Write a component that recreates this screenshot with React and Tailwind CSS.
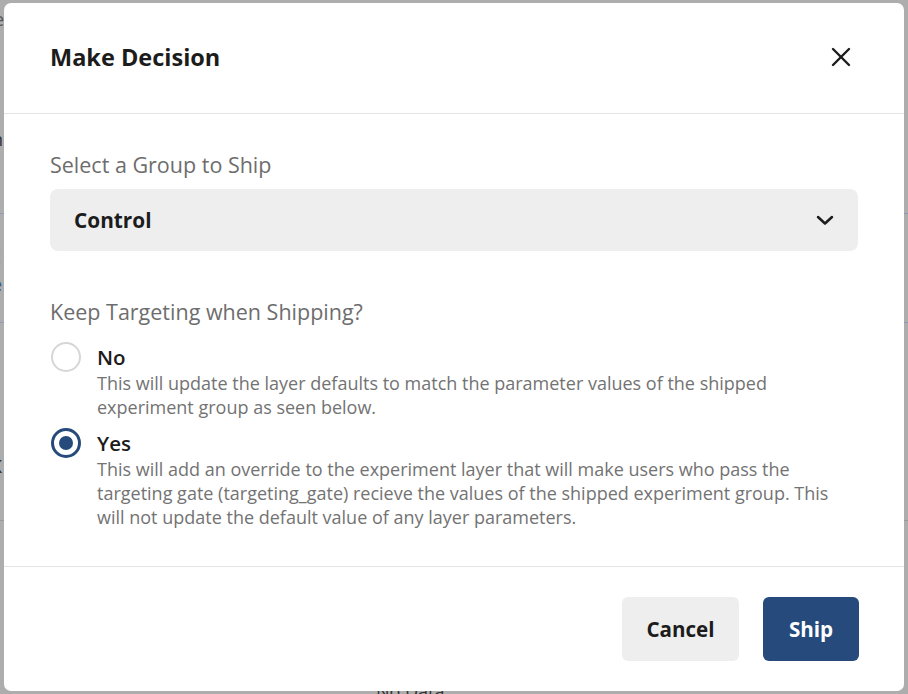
import React from "react";

export default function App() {
  return (
    <div
      className="relative w-[908px] h-[694px] overflow-hidden bg-[#adadad]"
      style={{ fontFamily: '"Open Sans", "Noto Sans", sans-serif' }}
    >
      {/* faint background page bits */}
      <div className="absolute left-0 top-[213px] w-[908px] h-px bg-[#8c9bb8]" />
      <div className="absolute left-0 top-[322px] w-[908px] h-px bg-[#8c9bb8]" />
      <div className="absolute left-0 top-[520px] w-[908px] h-px bg-[#9a9a9a]" />
      <div className="absolute left-[-6px] top-[6px] text-[18px] text-[#555]">e</div>
      <div className="absolute left-[-8px] top-[126px] text-[18px] text-[#333]">n</div>
      <div className="absolute left-[-8px] top-[243px] text-[18px] text-[#3a5c9a]">c</div>
      <div className="absolute left-[-8px] top-[271px] text-[18px] text-[#3a5c9a]">e</div>
      <div className="absolute left-[-9px] top-[453px] text-[18px] text-[#333]">K</div>
      <div className="absolute left-[376px] top-[678px] text-[18px] text-[#333]">No Data</div>

      {/* modal */}
      <div className="absolute left-[4px] top-[3px] w-[900px] h-[688px] bg-white rounded-[7px] flex flex-col">
        {/* header */}
        <div className="h-[111px] shrink-0 flex items-center justify-between pl-[46px] pr-[52px] border-b border-[#e4e4e4]">
          <h2 className="text-[23.5px] font-bold text-[#1c1c1c] leading-[30px] -mt-[3px]">Make Decision</h2>
          <svg width="22" height="22" viewBox="0 0 22 22" fill="none" stroke="#1c1c1c" strokeWidth="2.4" strokeLinecap="round" className="-mt-[3px]">
            <line x1="3" y1="3" x2="19" y2="19" />
            <line x1="19" y1="3" x2="3" y2="19" />
          </svg>
        </div>

        {/* body */}
        <div className="flex-1 px-[46px] pt-[37px] border-b border-[#e4e4e4]">
          <div className="text-[21.5px] leading-[28px] text-[#6d6d6d]">Select a Group to Ship</div>
          <div className="mt-[10px] h-[62px] rounded-[8px] bg-[#eeeeee] flex items-center justify-between pl-[24px] pr-[24px]">
            <span className="text-[20.8px] font-bold text-[#1c1c1c] mt-[2px]">Control</span>
            <svg width="18" height="12" viewBox="0 0 18 12" fill="none" stroke="#1c1c1c" strokeWidth="2.5" strokeLinecap="round" strokeLinejoin="round">
              <polyline points="2,3 9,9.5 16,3" />
            </svg>
          </div>

          <div className="mt-[47px] text-[21.5px] leading-[28px] text-[#6d6d6d]">Keep Targeting when Shipping?</div>

          <div className="mt-[17px] flex gap-[16px]">
            <div className="w-[31px] shrink-0 flex justify-center">
              <div className="w-[30px] h-[30px] -mt-px rounded-full border-[2.5px] border-[#d6d6d6] bg-white" />
            </div>
            <div>
              <div className="text-[20.5px] leading-[28px] font-semibold text-[#1c1c1c]">No</div>
              <div className="text-[18px] leading-[24px] text-[#737373]">
                This will update the layer defaults to match the parameter values of the shipped experiment group as seen below.
              </div>
            </div>
          </div>

          <div className="mt-[10px] flex gap-[16px]">
            <div className="w-[31px] shrink-0 flex justify-center">
              <div className="w-[30px] h-[30px] -mt-px rounded-full border-[3px] border-[#254a7b] bg-white flex items-center justify-center">
                <div className="w-[14px] h-[14px] rounded-full bg-[#254a7b]" />
              </div>
            </div>
            <div>
              <div className="text-[20.5px] leading-[28px] font-semibold text-[#1c1c1c]">Yes</div>
              <div className="text-[18px] leading-[24px] text-[#737373]">
                This will add an override to the experiment layer that will make users who pass the targeting gate (targeting_gate) recieve the values of the shipped experiment group. This will not update the default value of any layer parameters.
              </div>
            </div>
          </div>
        </div>

        {/* footer */}
        <div className="h-[124px] shrink-0 flex items-center justify-end gap-[24px] pr-[45px]">
          <button className="h-[64px] w-[117px] rounded-[6px] bg-[#eeeeee] text-[20.6px] font-bold text-[#1c1c1c]">Cancel</button>
          <button className="h-[64px] w-[96px] rounded-[6px] bg-[#254a7b] text-[20.6px] font-bold text-white">Ship</button>
        </div>
      </div>
    </div>
  );
}
